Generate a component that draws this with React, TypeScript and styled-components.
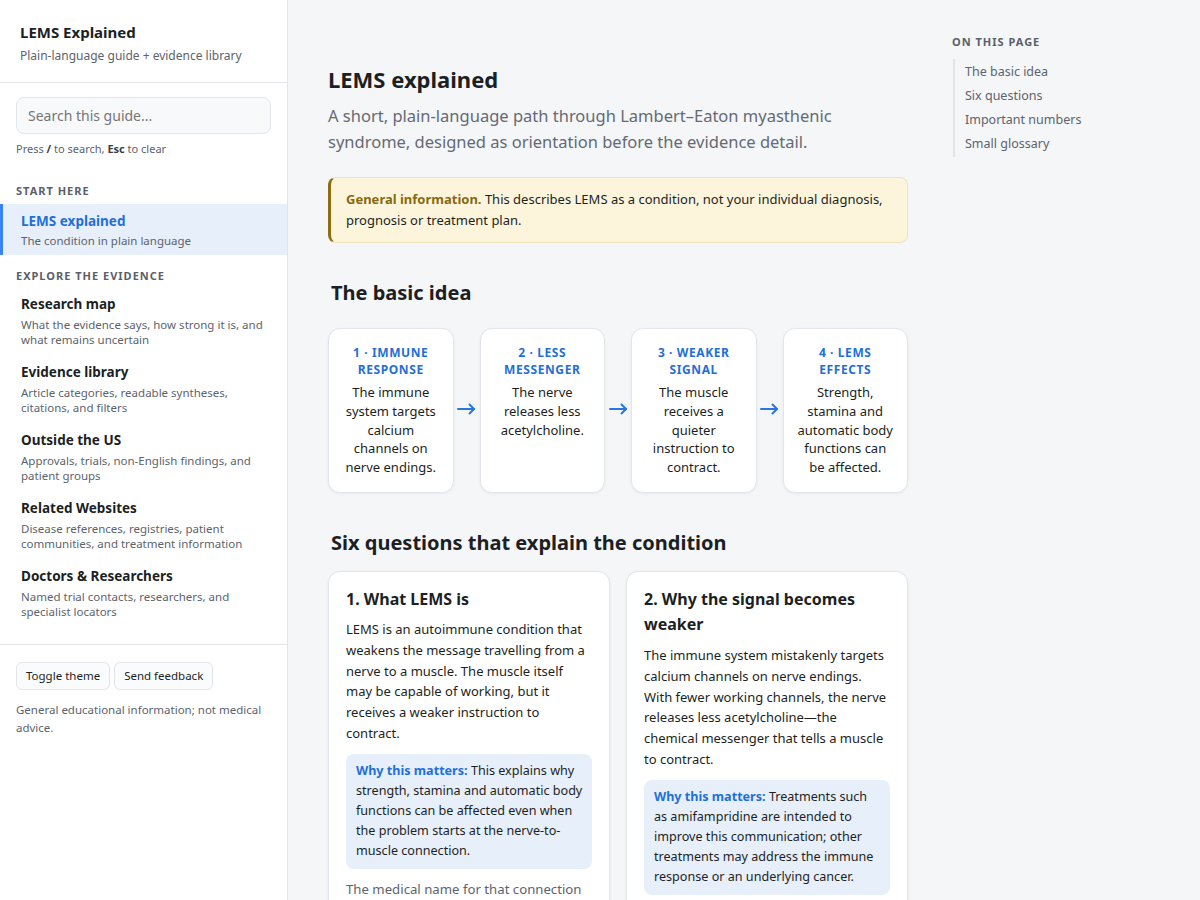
import { Fragment } from 'react';
import styled, { createGlobalStyle } from 'styled-components';

const GlobalStyle = createGlobalStyle`
  * { box-sizing: border-box; }
  body {
    margin: 0;
    font-family: "Noto Sans", "Open Sans", sans-serif;
    color: #1c1f24;
    background: #f5f6f8;
  }
`;

const COLOR = {
  BLUE: '#1f6fd8',
  BLUE_BG: '#e7effb',
  TEXT: '#1c1f24',
  MUTED: '#5d636d',
  BORDER: '#e2e5ea',
};

const Shell = styled.div`
  display: flex;
  height: 900px;
  overflow: hidden;
`;

const Sidebar = styled.aside`
  width: 288px;
  flex-shrink: 0;
  background: #fff;
  border-right: 1px solid ${COLOR.BORDER};
  display: flex;
  flex-direction: column;
`;

const Brand = styled.div`
  padding: 22px 20px 17px;
  border-bottom: 1px solid ${COLOR.BORDER};
`;

const BrandTitle = styled.div`
  font-size: 15px;
  font-weight: 700;
  line-height: 20px;
`;

const BrandSub = styled.div`
  margin-top: 5px;
  font-size: 12px;
  color: ${COLOR.MUTED};
  line-height: 18px;
`;

const SearchBlock = styled.div`
  padding: 14px 16px 0;
`;

const Search = styled.input`
  width: 100%;
  height: 37px;
  border: 1px solid ${COLOR.BORDER};
  border-radius: 8px;
  background: #f8f9fb;
  padding: 0 11px;
  font-family: inherit;
  font-size: 14px;
  color: ${COLOR.TEXT};
  outline: none;

  ::placeholder {
    color: #5f6570;
  }
`;

const Hint = styled.div`
  margin-top: 7px;
  font-size: 11px;
  color: ${COLOR.MUTED};
  line-height: 16px;

  b {
    color: #3a3f47;
  }
`;

const NavLabel = styled.div<{ first?: boolean }>`
  padding: 0 16px;
  margin-top: ${(p) => (p.first ? '26px' : '13px')};
  margin-bottom: 5px;
  font-size: 11px;
  font-weight: 700;
  letter-spacing: 1px;
  text-transform: uppercase;
  color: #5a606a;
  line-height: 16px;
`;

const NavItem = styled.div<{ active?: boolean }>`
  padding: ${(p) => (p.active ? '7px 18px 6px 18px' : '5px 18px 9px 21px')};
  background: ${(p) => (p.active ? COLOR.BLUE_BG : 'transparent')};
  border-left: ${(p) => (p.active ? '3px solid #3b82f6' : 'none')};
`;

const NavTitle = styled.div<{ active?: boolean }>`
  font-size: 13.5px;
  font-weight: 700;
  line-height: 20px;
  color: ${(p) => (p.active ? COLOR.BLUE : COLOR.TEXT)};
`;

const NavDesc = styled.div<{ active?: boolean }>`
  margin-top: ${(p) => (p.active ? '2px' : '3px')};
  font-size: 11.5px;
  line-height: 15.5px;
  color: ${COLOR.MUTED};
`;

const SideFooter = styled.div`
  margin-top: 15px;
  border-top: 1px solid ${COLOR.BORDER};
  padding: 17px 16px;
`;

const ButtonRow = styled.div`
  display: flex;
  gap: 4px;
`;

const SmallButton = styled.button`
  height: 28px;
  padding: 0 9px;
  border: 1px solid ${COLOR.BORDER};
  border-radius: 6px;
  background: #fafbfc;
  font-family: inherit;
  font-size: 11.5px;
  color: ${COLOR.TEXT};
`;

const FooterNote = styled.p`
  margin: 11px 0 0;
  font-size: 11.5px;
  line-height: 18px;
  color: ${COLOR.MUTED};
`;

const Main = styled.main`
  flex: 1;
  display: flex;
  gap: 44px;
  padding: 0 40px;
`;

const Article = styled.article`
  width: 580px;
  padding-top: 63px;
`;

const PageTitle = styled.h1`
  margin: 0;
  font-size: 22px;
  font-weight: 700;
  line-height: 32px;
`;

const Lead = styled.p`
  margin: 8px 0 0;
  font-size: 16.5px;
  line-height: 26px;
  color: #646a74;
`;

const Callout = styled.div`
  margin-top: 22px;
  padding: 11px 18px 11px 15px;
  background: #fcf5dc;
  border: 1px solid #efe3bb;
  border-left: 3px solid #8c6d12;
  border-radius: 8px;
  font-size: 13px;
  line-height: 21px;

  b {
    color: #86690f;
  }
`;

const SectionTitle = styled.h2<{ gap: number }>`
  margin: ${(p) => p.gap}px 0 0 3px;
  font-size: 20px;
  font-weight: 700;
  line-height: 28px;
`;

const Flow = styled.div`
  margin-top: 21px;
  display: grid;
  grid-template-columns: 1fr 26px 1fr 26px 1fr 26px 1fr;
  align-items: stretch;
`;

const FlowCard = styled.div`
  background: #fff;
  border: 1px solid ${COLOR.BORDER};
  border-radius: 12px;
  box-shadow: 0 1px 3px rgba(20, 30, 50, 0.06);
  padding: 15px 13px 14px;
  text-align: center;
  min-height: 165px;
`;

const FlowLabel = styled.div`
  font-size: 12px;
  font-weight: 700;
  letter-spacing: 0.6px;
  line-height: 17px;
  text-transform: uppercase;
  color: ${COLOR.BLUE};
`;

const FlowText = styled.div`
  margin-top: 5px;
  font-size: 13px;
  line-height: 18.8px;
`;

const Arrow = styled.div`
  display: flex;
  align-items: center;
  justify-content: center;
  color: #2a76e0;
  padding-bottom: 3px;
`;

const QuestionGrid = styled.div`
  margin-top: 14px;
  display: grid;
  grid-template-columns: 1fr 1fr;
  gap: 16px;
`;

const QuestionCard = styled.div`
  background: #fff;
  border: 1px solid ${COLOR.BORDER};
  border-radius: 12px;
  box-shadow: 0 1px 3px rgba(20, 30, 50, 0.06);
  padding: 15px 17px 18px;
`;

const QuestionTitle = styled.h3`
  margin: 0;
  font-size: 16px;
  font-weight: 700;
  line-height: 25px;
`;

const Body = styled.p<{ muted?: boolean; gap?: number }>`
  margin: ${(p) => p.gap ?? 7}px 0 0;
  font-size: ${(p) => (p.muted ? '13.2px' : '13px')};
  line-height: 20.8px;
  color: ${(p) => (p.muted ? '#5d636d' : COLOR.TEXT)};
`;

const Matters = styled.div`
  margin-top: 10px;
  padding: 7px 8px 8px 10px;
  background: ${COLOR.BLUE_BG};
  border-radius: 8px;
  font-size: 12.6px;
  line-height: 20px;

  b {
    color: ${COLOR.BLUE};
  }
`;

const Toc = styled.nav`
  padding-top: 34px;
  width: 180px;
`;

const TocLabel = styled.div`
  font-size: 11px;
  font-weight: 700;
  letter-spacing: 1px;
  line-height: 16px;
  color: #5a606a;
`;

const TocList = styled.div`
  margin-top: 9px;
  margin-left: 1px;
  border-left: 2px solid #e1e4e9;
  padding: 1px 0 1px 10px;
  display: flex;
  flex-direction: column;
`;

const TocLink = styled.div`
  font-size: 12.5px;
  line-height: 24px;
  color: #5d636d;
`;

const navItems = [
  {
    title: 'Research map',
    desc: 'What the evidence says, how strong it is, and what remains uncertain',
  },
  {
    title: 'Evidence library',
    desc: 'Article categories, readable syntheses, citations, and filters',
  },
  {
    title: 'Outside the US',
    desc: 'Approvals, trials, non-English findings, and patient groups',
  },
  {
    title: 'Related Websites',
    desc: 'Disease references, registries, patient communities, and treatment information',
  },
  {
    title: 'Doctors & Researchers',
    desc: 'Named trial contacts, researchers, and specialist locators',
  },
];

const steps = [
  { label: '1 · Immune response', text: 'The immune system targets calcium channels on nerve endings.' },
  { label: '2 · Less messenger', text: 'The nerve releases less acetylcholine.' },
  { label: '3 · Weaker signal', text: 'The muscle receives a quieter instruction to contract.' },
  { label: '4 · LEMS effects', text: 'Strength, stamina and automatic body functions can be affected.' },
];

const tocLinks = ['The basic idea', 'Six questions', 'Important numbers', 'Small glossary'];

// small right arrow between the flow steps
const StepArrow = () => (
  <svg width="19" height="12" viewBox="0 0 19 12" fill="none">
    <path d="M1 6h16" stroke="currentColor" strokeWidth="2" strokeLinecap="round" />
    <path
      d="M12.5 1.5 17 6l-4.5 4.5"
      stroke="currentColor"
      strokeWidth="2"
      strokeLinecap="round"
      strokeLinejoin="round"
    />
  </svg>
);

export default function App() {
  return (
    <>
      <GlobalStyle />
      <Shell>
        <Sidebar>
          <Brand>
            <BrandTitle>LEMS Explained</BrandTitle>
            <BrandSub>Plain-language guide + evidence library</BrandSub>
          </Brand>
          <SearchBlock>
            <Search placeholder="Search this guide..." />
            <Hint>
              Press <b>/</b> to search, <b>Esc</b> to clear
            </Hint>
          </SearchBlock>

          <NavLabel first>Start here</NavLabel>
          <NavItem active>
            <NavTitle active>LEMS explained</NavTitle>
            <NavDesc active>The condition in plain language</NavDesc>
          </NavItem>

          <NavLabel>Explore the evidence</NavLabel>
          {navItems.map((item) => (
            <NavItem key={item.title}>
              <NavTitle>{item.title}</NavTitle>
              <NavDesc>{item.desc}</NavDesc>
            </NavItem>
          ))}

          <SideFooter>
            <ButtonRow>
              <SmallButton>Toggle theme</SmallButton>
              <SmallButton>Send feedback</SmallButton>
            </ButtonRow>
            <FooterNote>General educational information; not medical advice.</FooterNote>
          </SideFooter>
        </Sidebar>

        <Main>
          <Article>
            <PageTitle>LEMS explained</PageTitle>
            <Lead>
              A short, plain-language path through Lambert–Eaton myasthenic syndrome, designed as
              orientation before the evidence detail.
            </Lead>
            <Callout>
              <b>General information.</b> This describes LEMS as a condition, not your individual
              diagnosis, prognosis or treatment plan.
            </Callout>

            <SectionTitle gap={36}>The basic idea</SectionTitle>
            <Flow>
              {steps.map((step, i) => (
                <Fragment key={step.label}>
                  {i > 0 && (
                    <Arrow>
                      <StepArrow />
                    </Arrow>
                  )}
                  <FlowCard>
                    <FlowLabel>{step.label}</FlowLabel>
                    <FlowText>{step.text}</FlowText>
                  </FlowCard>
                </Fragment>
              ))}
            </Flow>

            <SectionTitle gap={36}>Six questions that explain the condition</SectionTitle>
            <QuestionGrid>
              <QuestionCard>
                <QuestionTitle>1. What LEMS is</QuestionTitle>
                <Body>
                  LEMS is an autoimmune condition that weakens the message travelling from a nerve to
                  a muscle. The muscle itself may be capable of working, but it receives a weaker
                  instruction to contract.
                </Body>
                <Matters>
                  <b>Why this matters:</b> This explains why strength, stamina and automatic body
                  functions can be affected even when the problem starts at the nerve-to-muscle
                  connection.
                </Matters>
                <Body muted gap={10}>
                  The medical name for that connection is the neuromuscular junction.
                </Body>
              </QuestionCard>
              <QuestionCard>
                <QuestionTitle>2. Why the signal becomes weaker</QuestionTitle>
                <Body gap={8}>
                  The immune system mistakenly targets calcium channels on nerve endings. With fewer
                  working channels, the nerve releases less acetylcholine—the chemical messenger that
                  tells a muscle to contract.
                </Body>
                <Matters>
                  <b>Why this matters:</b> Treatments such as amifampridine are intended to improve
                  this communication; other treatments may address the immune response or an
                  underlying cancer.
                </Matters>
              </QuestionCard>
            </QuestionGrid>
          </Article>

          <Toc>
            <TocLabel>ON THIS PAGE</TocLabel>
            <TocList>
              {tocLinks.map((link) => (
                <TocLink key={link}>{link}</TocLink>
              ))}
            </TocList>
          </Toc>
        </Main>
      </Shell>
    </>
  );
}
